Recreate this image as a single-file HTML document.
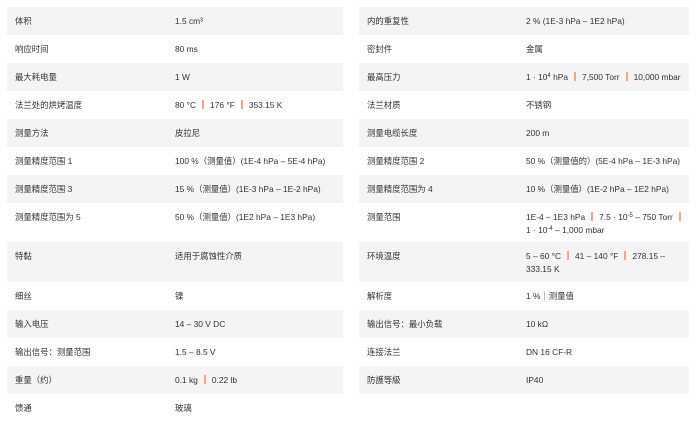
<!DOCTYPE html>
<html><head><meta charset="utf-8"><style>
*{margin:0;padding:0;box-sizing:border-box}
body{width:698px;height:429px;background:#fff;font-family:"Liberation Sans","Noto Sans CJK SC",sans-serif;font-size:8.4px;color:#333;position:relative;overflow:hidden}
.t{position:absolute;top:7px}
.r{position:relative;height:28px;padding-top:8px;line-height:13px}
.r.g{background:#f4f4f4}
.l{position:absolute;left:8px}
.v{position:absolute}
.s{display:inline-block;width:2px;height:9px;background:#f4a58a;margin:0 6px;vertical-align:-1px}
sup{font-size:6px;vertical-align:3px;line-height:0}
</style></head><body>
<div class="t" style="left:7px;width:336px">
<div class="r g"><span class="l">体积</span><span class="v" style="left:168px">1.5 cm³</span></div>
<div class="r"><span class="l">响应时间</span><span class="v" style="left:168px">80 ms</span></div>
<div class="r g"><span class="l">最大耗电量</span><span class="v" style="left:168px">1 W</span></div>
<div class="r"><span class="l">法兰处的烘烤温度</span><span class="v" style="left:168px">80 °C<span class="s"></span>176 °F<span class="s"></span>353.15 K</span></div>
<div class="r g"><span class="l">测量方法</span><span class="v" style="left:168px">皮拉尼</span></div>
<div class="r"><span class="l">测量精度范围 1</span><span class="v" style="left:168px">100 %（测量值）(1E-4 hPa – 5E-4 hPa)</span></div>
<div class="r g"><span class="l">测量精度范围 3</span><span class="v" style="left:168px">15 %（测量值）(1E-3 hPa – 1E-2 hPa)</span></div>
<div class="r" style="height:39px"><span class="l">测量精度范围为 5</span><span class="v" style="left:168px">50 %（测量值）(1E2 hPa – 1E3 hPa)</span></div>
<div class="r g" style="height:40px"><span class="l">特黏</span><span class="v" style="left:168px">适用于腐蚀性介质</span></div>
<div class="r"><span class="l">细丝</span><span class="v" style="left:168px">镍</span></div>
<div class="r g"><span class="l">输入电压</span><span class="v" style="left:168px">14 – 30 V DC</span></div>
<div class="r"><span class="l">输出信号：测量范围</span><span class="v" style="left:168px">1.5 – 8.5 V</span></div>
<div class="r g"><span class="l">重量（约）</span><span class="v" style="left:168px">0.1 kg<span class="s"></span>0.22 lb</span></div>
<div class="r"><span class="l">馈通</span><span class="v" style="left:168px">玻璃</span></div>
</div>
<div class="t" style="left:359px;width:330px">
<div class="r g"><span class="l">内的重复性</span><span class="v" style="left:167px">2 % (1E-3 hPa – 1E2 hPa)</span></div>
<div class="r"><span class="l">密封件</span><span class="v" style="left:167px">金属</span></div>
<div class="r g"><span class="l">最高压力</span><span class="v" style="left:167px">1 · 10<sup>4</sup> hPa<span class="s"></span>7,500 Torr<span class="s"></span>10,000 mbar</span></div>
<div class="r"><span class="l">法兰材质</span><span class="v" style="left:167px">不锈钢</span></div>
<div class="r g"><span class="l">测量电缆长度</span><span class="v" style="left:167px">200 m</span></div>
<div class="r"><span class="l">测量精度范围 2</span><span class="v" style="left:167px">50 %（测量值的）(5E-4 hPa – 1E-3 hPa)</span></div>
<div class="r g"><span class="l">测量精度范围为 4</span><span class="v" style="left:167px">10 %（测量值）(1E-2 hPa – 1E2 hPa)</span></div>
<div class="r" style="height:39px"><span class="l">测量范围</span><span class="v" style="left:167px">1E-4 – 1E3 hPa<span class="s"></span>7.5 · 10<sup>-5</sup> – 750 Torr<span class="s"></span><br>1 · 10<sup>-4</sup> – 1,000 mbar</span></div>
<div class="r g" style="height:40px"><span class="l">环境温度</span><span class="v" style="left:167px">5 – 60 °C<span class="s"></span>41 – 140 °F<span class="s"></span>278.15 –<br>333.15 K</span></div>
<div class="r"><span class="l">解析度</span><span class="v" style="left:167px">1 %｜测量值</span></div>
<div class="r g"><span class="l">输出信号：最小负载</span><span class="v" style="left:167px">10 kΩ</span></div>
<div class="r"><span class="l">连接法兰</span><span class="v" style="left:167px">DN 16 CF-R</span></div>
<div class="r g"><span class="l">防護等級</span><span class="v" style="left:167px">IP40</span></div>
</div>
</body></html>
